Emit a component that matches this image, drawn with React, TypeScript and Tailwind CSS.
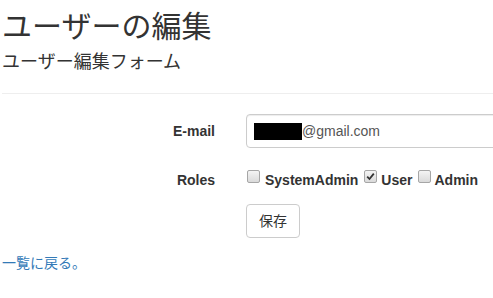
import React from "react";

function Box({ checked = false }: { checked?: boolean }) {
  return (
    <span className="mt-[7px] flex h-[13px] w-[13px] shrink-0 items-center justify-center rounded-[2px] border border-[#a6a6a6] bg-gradient-to-b from-[#f4f4f4] to-[#dadada]">
      {checked && (
        <svg width="9" height="9" viewBox="0 0 9 9">
          <path d="M1.2 4.6 L3.5 7 L7.8 1.6" fill="none" stroke="#333" strokeWidth="1.8" />
        </svg>
      )}
    </span>
  );
}

export default function App() {
  return (
    <div className="h-[298px] w-[493px] overflow-hidden bg-white pl-[2px] font-['Liberation_Sans','Noto_Sans_CJK_JP',sans-serif] text-[14px] leading-[20px] text-[#333]">
      <h2 className="mt-[10px] text-[30px] leading-[33px]">ユーザーの編集</h2>
      <h4 className="mt-[9px] text-[18px] leading-[20px]">ユーザー編集フォーム</h4>
      <hr className="mt-[21px] w-[600px] border-t border-[#eee]" />

      <form className="mt-[20px]">
        <div className="flex">
          <label className="w-[213px] shrink-0 pt-[7px] text-right font-bold">E-mail</label>
          <div className="shrink-0 pl-[31px]">
            <div className="flex h-[34px] w-[300px] items-center rounded border border-[#ccc] pl-[7px] text-[#555] shadow-[inset_0_1px_1px_rgba(0,0,0,0.075)]">
              <span className="h-[17px] w-[48px] bg-black" />
              <span>@gmail.com</span>
            </div>
          </div>
        </div>

        <div className="mt-[15px] flex">
          <label className="w-[213px] shrink-0 pt-[7px] text-right font-bold">Roles</label>
          <div className="flex shrink-0 items-start pl-[32px] font-bold">
            <Box />
            <span className="ml-[5px] pt-[7px]">SystemAdmin</span>
            <span className="ml-[6px]">
              <Box checked />
            </span>
            <span className="ml-[4px] pt-[7px]">User</span>
            <span className="ml-[5px]">
              <Box />
            </span>
            <span className="ml-[4px] pt-[7px]">Admin</span>
          </div>
        </div>

        <div className="mt-[14px] pl-[244px]">
          <button
            type="button"
            className="h-[34px] rounded border border-[#ccc] bg-white px-[12px] text-[14px] text-[#333]"
          >
            保存
          </button>
        </div>
      </form>

      <a href="#" className="mt-[15px] block text-[#337ab7]">
        一覧に戻る。
      </a>
    </div>
  );
}
